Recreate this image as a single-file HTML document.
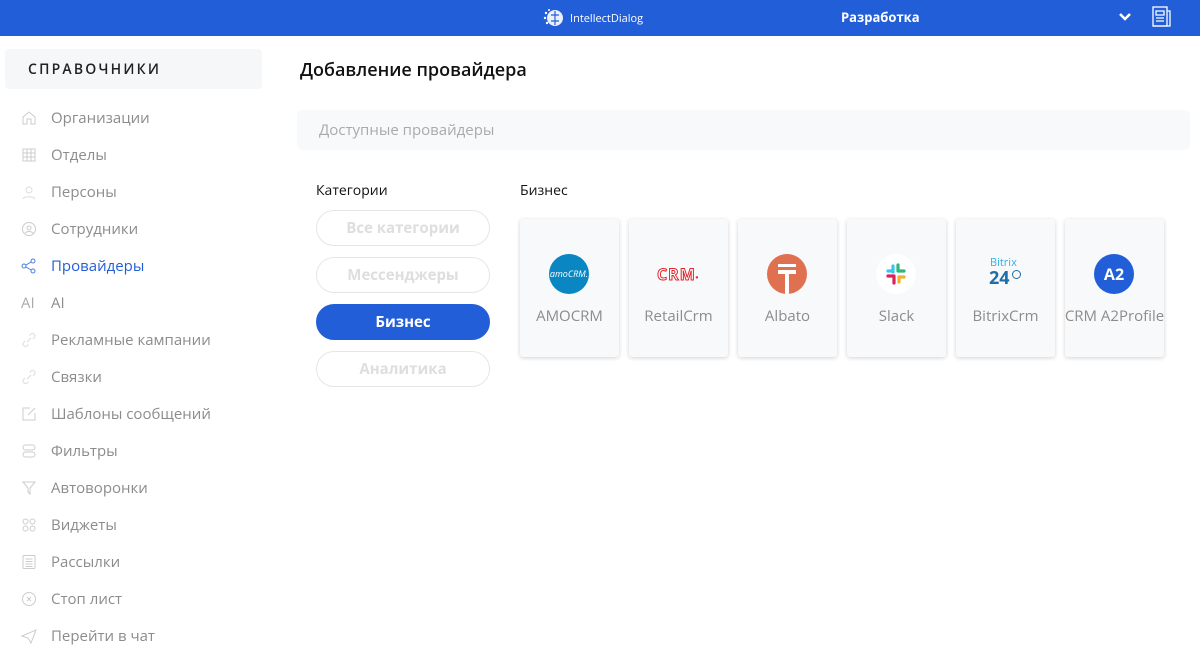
<!DOCTYPE html>
<html><head><meta charset="utf-8"><style>
*{margin:0;padding:0;box-sizing:border-box}
body{width:1200px;height:639px;overflow:hidden;background:#fff;font-family:"Open Sans","Liberation Sans","DejaVu Sans",sans-serif;position:relative}
.hdr{position:absolute;left:0;top:0;width:1200px;height:36px;background:#235ed9;color:#fff}
.abs{position:absolute}
.side{position:absolute;left:5px;top:49px;width:257px;height:40px;background:#f6f7f9;border-radius:4px;font-weight:600;font-size:14px;letter-spacing:2.2px;color:#222;padding:11px 0 0 23px}
.item{position:absolute;left:0;height:20px;font-size:15px;color:#8c8c8c;white-space:nowrap}
.item span{position:absolute;left:51px;top:0}
.item svg{position:absolute;left:21px;top:2px}
.btn{position:absolute;left:316px;width:174px;height:36px;border-radius:18px;border:1px solid #e6e6e6;color:#dedede;font-weight:bold;font-size:15px;text-align:center;line-height:34px}
.card{position:absolute;top:219px;width:99px;height:138px;background:#f8f9fb;border-radius:3px;box-shadow:0 1px 4px rgba(0,0,0,.18)}
.card .ic{position:absolute;left:29px;top:35px;width:40px;height:40px;border-radius:50%}
.card .lb{position:absolute;left:-10px;right:-10px;top:87px;text-align:center;font-size:15px;color:#8c8c8c;white-space:nowrap}
</style></head><body>
<div class="hdr">
 <svg class="abs" style="left:543px;top:7px" width="24" height="22" viewBox="0 0 24 22"><g fill="#fff"><circle cx="12" cy="11" r="8" opacity=".9"/><circle cx="3" cy="6" r="1.2"/><circle cx="2" cy="11" r="1.2"/><circle cx="4" cy="16" r="1.2"/><circle cx="6" cy="3" r="1"/></g><path d="M12 4v14M8 8h8M8 14h8" stroke="#235ed9" stroke-width="1.2"/></svg>
 <div class="abs" style="left:570px;top:11px;font-size:11px">IntellectDialog</div>
 <div class="abs" style="left:841px;top:8px;font-size:13px;font-weight:bold">Разработка</div>
 <svg class="abs" style="left:1118px;top:11px" width="14" height="12" viewBox="0 0 14 12"><path d="M2 3l5 5 5-5" stroke="#fff" stroke-width="2.5" fill="none"/></svg>
 <svg class="abs" style="left:1151px;top:6px" width="22" height="22" viewBox="0 0 22 22" fill="none" stroke="#fff" stroke-width="1.3"><rect x="2" y="1" width="14" height="19"/><path d="M16 5h3v15H2"/><path d="M5 5h8v4H5zM5 12h8M5 15h8"/></svg>
</div>
<div class="side">СПРАВОЧНИКИ</div>
<div class="item" style="top:108px"><svg width="16" height="16" viewBox="0 0 16 16" fill="none" stroke="#ccc"><path d="M2 14V7l6-5 6 5v7h-4V9H6v5z"/></svg><span>Организации</span></div>
<div class="item" style="top:145px"><svg width="16" height="16" viewBox="0 0 16 16" fill="none" stroke="#ccc"><rect x="2" y="2" width="12" height="12"/><path d="M6 2v12M10 2v12M2 6h12M2 10h12"/></svg><span>Отделы</span></div>
<div class="item" style="top:182px"><svg width="16" height="16" viewBox="0 0 16 16" fill="none" stroke="#ddd"><circle cx="8" cy="6" r="3"/><path d="M2 15c1-3 11-3 12 0"/></svg><span>Персоны</span></div>
<div class="item" style="top:219px"><svg width="16" height="16" viewBox="0 0 16 16" fill="none" stroke="#ccc"><circle cx="8" cy="8" r="6.5"/><circle cx="8" cy="7" r="2"/><path d="M4 12c2-2 6-2 8 0"/></svg><span>Сотрудники</span></div>
<div class="item" style="top:256px;color:#235ed9"><svg width="16" height="16" viewBox="0 0 16 16" fill="none" stroke="#4a7be0"><circle cx="3" cy="8" r="2"/><circle cx="12" cy="3" r="2"/><circle cx="12" cy="13" r="2"/><path d="M5 7l5-3M5 9l5 3"/></svg><span>Провайдеры</span></div>
<div class="item" style="top:293px"><span style="left:21px;color:#aaa">AI</span><span>AI</span></div>
<div class="item" style="top:330px"><svg width="16" height="16" viewBox="0 0 16 16" fill="none" stroke="#ddd"><path d="M6 10l4-4M4 9l-1.5 1.5a2.5 2.5 0 003.5 3.5L7.5 12.5M8.5 3.5L10 2a2.5 2.5 0 013.5 3.5L12 7"/></svg><span>Рекламные кампании</span></div>
<div class="item" style="top:367px"><svg width="16" height="16" viewBox="0 0 16 16" fill="none" stroke="#ddd"><path d="M6 10l4-4M4 9l-1.5 1.5a2.5 2.5 0 003.5 3.5L7.5 12.5M8.5 3.5L10 2a2.5 2.5 0 013.5 3.5L12 7"/></svg><span>Связки</span></div>
<div class="item" style="top:404px"><svg width="16" height="16" viewBox="0 0 16 16" fill="none" stroke="#ccc"><path d="M9 2H2v12h12V7"/><path d="M7 9l7-7"/></svg><span>Шаблоны сообщений</span></div>
<div class="item" style="top:441px"><svg width="16" height="16" viewBox="0 0 16 16" fill="none" stroke="#ccc"><rect x="2" y="2" width="12" height="5" rx="2.5"/><rect x="2" y="9" width="12" height="5" rx="2.5"/></svg><span>Фильтры</span></div>
<div class="item" style="top:478px"><svg width="16" height="16" viewBox="0 0 16 16" fill="none" stroke="#ccc"><path d="M2 2h12l-5 6v6l-2-2V8z"/></svg><span>Автоворонки</span></div>
<div class="item" style="top:515px"><svg width="16" height="16" viewBox="0 0 16 16" fill="none" stroke="#ccc"><circle cx="4.5" cy="4.5" r="2.5"/><circle cx="11.5" cy="4.5" r="2.5"/><circle cx="4.5" cy="11.5" r="2.5"/><circle cx="11.5" cy="11.5" r="2.5"/></svg><span>Виджеты</span></div>
<div class="item" style="top:552px"><svg width="16" height="16" viewBox="0 0 16 16" fill="none" stroke="#ccc"><rect x="2" y="1.5" width="12" height="13" rx="1"/><path d="M4.5 5h7M4.5 7.5h7M4.5 10h7M4.5 12.5h7"/></svg><span>Рассылки</span></div>
<div class="item" style="top:589px"><svg width="16" height="16" viewBox="0 0 16 16" fill="none" stroke="#ccc"><circle cx="8" cy="8" r="6.5"/><path d="M6 6l4 4M10 6l-4 4"/></svg><span>Стоп лист</span></div>
<div class="item" style="top:626px"><svg width="16" height="16" viewBox="0 0 16 16" fill="none" stroke="#ccc"><path d="M1 8l14-6-5 13-3-5z"/></svg><span>Перейти в чат</span></div>

<div class="abs" style="left:300px;top:58px;font-size:18px;color:#111;font-weight:600">Добавление провайдера</div>
<div class="abs" style="left:297px;top:110px;width:893px;height:40px;background:#f8f9fb;border-radius:6px;font-size:15px;color:#aaa;padding:10px 0 0 22px">Доступные провайдеры</div>
<div class="abs" style="left:316px;top:181px;font-size:14px;color:#111">Категории</div>
<div class="abs" style="left:520px;top:181px;font-size:14px;color:#111">Бизнес</div>
<div class="btn" style="top:210px">Все категории</div>
<div class="btn" style="top:257px">Мессенджеры</div>
<div class="btn" style="top:304px;background:#235ed9;border-color:#235ed9;color:#fff">Бизнес</div>
<div class="btn" style="top:351px">Аналитика</div>

<div class="card" style="left:520px"><div class="ic" style="background:#0a86c2;color:#fff;font-size:9px;font-style:italic;text-align:center;line-height:40px">amoCRM.</div><div class="lb">AMOCRM</div></div>
<div class="card" style="left:629px"><div class="ic" style="color:#fff;-webkit-text-stroke:1px #e0262d;font-size:16px;font-weight:bold;letter-spacing:1px;text-align:center;line-height:40px;left:25px;width:48px">CRM<span style="font-size:8px">·</span></div><div class="lb">RetailCrm</div></div>
<div class="card" style="left:738px"><div class="ic" style="background:#e07150;overflow:hidden"><div class="abs" style="left:11px;top:10px;width:18px;height:3px;background:#fff"></div><div class="abs" style="left:11px;top:16px;width:18px;height:4px;background:#fff"></div><div class="abs" style="left:18px;top:19px;width:4px;height:21px;background:#fff"></div></div><div class="lb">Albato</div></div>
<div class="card" style="left:847px"><div class="ic" style="background:#fff"><svg width="40" height="40" viewBox="0 0 40 40"><g stroke-linecap="round" stroke-width="3.2"><path d="M17 12v6" stroke="#36c5f0"/><path d="M12 17h5" stroke="#36c5f0"/><path d="M22 11v6" stroke="#2eb67d"/><path d="M23 17h5" stroke="#2eb67d"/><path d="M23 23h5" stroke="#ecb22e"/><path d="M23 23v5" stroke="#ecb22e"/><path d="M12 22h6" stroke="#e01e5a"/><path d="M18 23v6" stroke="#e01e5a"/></g></svg></div><div class="lb">Slack</div></div>
<div class="card" style="left:956px"><div class="ic" style="left:32px;top:36px;width:40px;height:40px;border-radius:0"><div class="abs" style="left:2px;top:0;font-size:11px;color:#2fb0e8">Bitrix</div><div class="abs" style="left:1px;top:11px;font-size:18px;font-weight:bold;color:#1f6ea8">24</div><div class="abs" style="left:24px;top:15px;width:9px;height:9px;border:1px solid #1f6ea8;border-radius:50%"></div></div><div class="lb">BitrixCrm</div></div>
<div class="card" style="left:1065px"><div class="ic" style="background:#235ed9;color:#fff;font-size:16px;font-weight:bold;text-align:center;line-height:40px">A2</div><div class="lb">CRM A2Profile</div></div>
</body></html>
